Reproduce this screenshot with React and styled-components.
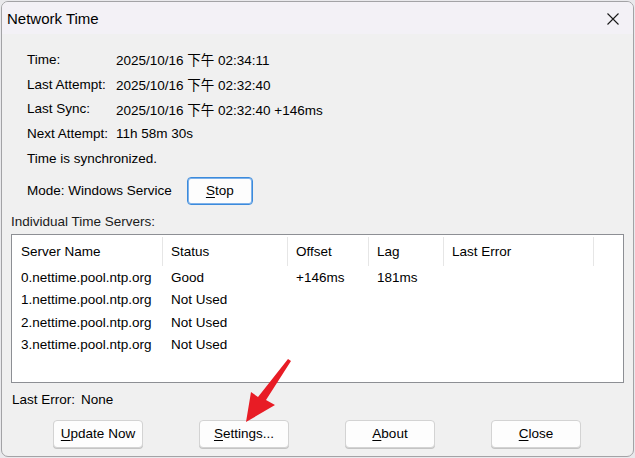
import React from "react";
import styled, { createGlobalStyle } from "styled-components";

const GlobalStyle = createGlobalStyle`
  html, body {
    margin: 0;
    padding: 0;
    background: #e9e9ec;
  }
  body {
    font-family: "Liberation Sans", Arial, "Noto Sans CJK TC", sans-serif;
    font-size: 13.5px;
    color: #000;
  }
`;

const infoRows = [
  { label: "Time:", value: "2025/10/16 下午 02:34:11" },
  { label: "Last Attempt:", value: "2025/10/16 下午 02:32:40" },
  { label: "Last Sync:", value: "2025/10/16 下午 02:32:40 +146ms" },
  { label: "Next Attempt:", value: "11h 58m 30s" },
];

const columns = [
  { title: "Server Name", width: 151 },
  { title: "Status", width: 125 },
  { title: "Offset", width: 81 },
  { title: "Lag", width: 75 },
  { title: "Last Error", width: 150 },
];

const servers = [
  ["0.nettime.pool.ntp.org", "Good", "+146ms", "181ms", ""],
  ["1.nettime.pool.ntp.org", "Not Used", "", "", ""],
  ["2.nettime.pool.ntp.org", "Not Used", "", "", ""],
  ["3.nettime.pool.ntp.org", "Not Used", "", "", ""],
];

const App = () => {
  return (
    <>
      <GlobalStyle />
      <Window>
        <TitleBar>
          <Title>Network Time</Title>
          <CloseIcon viewBox="0 0 12 12">
            <path d="M0.5 0.5 L11.5 11.5 M11.5 0.5 L0.5 11.5" stroke="#1a1a1a" strokeWidth="1.1" />
          </CloseIcon>
        </TitleBar>
        <Body>
          <Info>
            {infoRows.map((row) => (
              <InfoRow key={row.label}>
                <InfoLabel>{row.label}</InfoLabel>
                <span>{row.value}</span>
              </InfoRow>
            ))}
            <InfoRow>Time is synchronized.</InfoRow>
            <ModeRow>
              <span>Mode: Windows Service</span>
              <Button $primary $width={66}>
                <u>S</u>top
              </Button>
            </ModeRow>
          </Info>

          <SectionLabel>Individual Time Servers:</SectionLabel>
          <ListBox>
            <HeaderRow>
              {columns.map((c, i) => (
                <HeaderCell key={c.title} $first={i === 0} style={{ width: c.width }}>
                  {c.title}
                </HeaderCell>
              ))}
            </HeaderRow>
            {servers.map((s) => (
              <DataRow key={s[0]}>
                {s.map((v, i) => (
                  <DataCell key={i} $first={i === 0} style={{ width: columns[i].width }}>
                    {v}
                  </DataCell>
                ))}
              </DataRow>
            ))}
          </ListBox>

          <LastError>
            <span>Last Error:</span>
            <span>None</span>
          </LastError>

          <ButtonRow>
            <Button>
              <u>U</u>pdate Now
            </Button>
            <Button>
              <u>S</u>ettings...
            </Button>
            <Button>
              <u>A</u>bout
            </Button>
            <Button>
              <u>C</u>lose
            </Button>
          </ButtonRow>
        </Body>

        <Arrow viewBox="0 0 60 70">
          <path
            d="M52 6 L55 8 L30 47 L39 52 L10 69 L15 39 L22 44 Z"
            fill="#e81c25"
          />
        </Arrow>
      </Window>
    </>
  );
};

const Window = styled.div`
  position: relative;
  box-sizing: border-box;
  margin: 1px 0 0 1px;
  width: 633px;
  height: 456px;
  background: #f0f0f0;
  border: 1px solid #a3a3a6;
  border-radius: 7px;
  overflow: hidden;
  display: flex;
  flex-direction: column;
`;

const TitleBar = styled.div`
  height: 32px;
  flex-shrink: 0;
  background: #f3f1f6;
  display: flex;
  align-items: center;
  justify-content: space-between;
  padding: 0 14px 0 5px;
`;

const Title = styled.div`
  font-size: 15px;
  color: #000;
  margin-top: 1px;
`;

const CloseIcon = styled.svg`
  width: 12px;
  height: 12px;
  margin-top: 1px;
`;

const Body = styled.div`
  display: flex;
  flex-direction: column;
  padding: 0 9px 0 9px;
`;

const Info = styled.div`
  display: flex;
  flex-direction: column;
  padding: 13px 0 0 16px;
`;

const InfoRow = styled.div`
  height: 24.8px;
  display: flex;
  align-items: center;
  white-space: nowrap;
`;

const InfoLabel = styled.span`
  width: 89px;
  flex-shrink: 0;
`;

const ModeRow = styled.div`
  display: flex;
  align-items: center;
  gap: 15px;
  margin-top: 6px;
`;

const Button = styled.div`
  box-sizing: border-box;
  width: ${(p) => p.$width || 90}px;
  height: 28px;
  display: flex;
  align-items: center;
  justify-content: center;
  background: #fdfdfd;
  border-radius: 4px;
  border: 1px solid ${(p) => (p.$primary ? "#3c8bdc" : "#d3d3d3")};
  box-shadow: ${(p) => (p.$primary ? "inset 0 0 0 1px #7fb2ea" : "0 1px 0 #c4c4c4")};
  color: #000;
  u {
    text-underline-offset: 2px;
  }
`;

const SectionLabel = styled.div`
  height: 16px;
  line-height: 16px;
  margin-top: 9px;
  color: #1a1a1a;
`;

const ListBox = styled.div`
  box-sizing: border-box;
  margin-top: 4px;
  width: 613px;
  height: 149px;
  background: #fff;
  border: 1px solid #8d8f94;
  display: flex;
  flex-direction: column;
`;

const HeaderRow = styled.div`
  display: flex;
  height: 31px;
  align-items: center;
`;

const HeaderCell = styled.div`
  box-sizing: border-box;
  flex-shrink: 0;
  height: 29px;
  padding-left: ${(p) => (p.$first ? 9 : 8)}px;
  display: flex;
  align-items: center;
  border-right: 1px solid #e6e6e6;
  margin-top: 2px;
  white-space: nowrap;
`;

const DataRow = styled.div`
  display: flex;
  height: 22.5px;
  align-items: center;
`;

const DataCell = styled.div`
  box-sizing: border-box;
  flex-shrink: 0;
  padding-left: ${(p) => (p.$first ? 9 : 8)}px;
  white-space: nowrap;
`;

const LastError = styled.div`
  display: flex;
  gap: 6px;
  height: 16px;
  line-height: 16px;
  margin-top: 9px;
  margin-left: 1px;
`;

const ButtonRow = styled.div`
  display: flex;
  gap: 56px;
  margin-top: 12px;
  padding-left: 42px;
`;

const Arrow = styled.svg`
  position: absolute;
  left: 234px;
  top: 351px;
  width: 60px;
  height: 70px;
`;

export default App;
